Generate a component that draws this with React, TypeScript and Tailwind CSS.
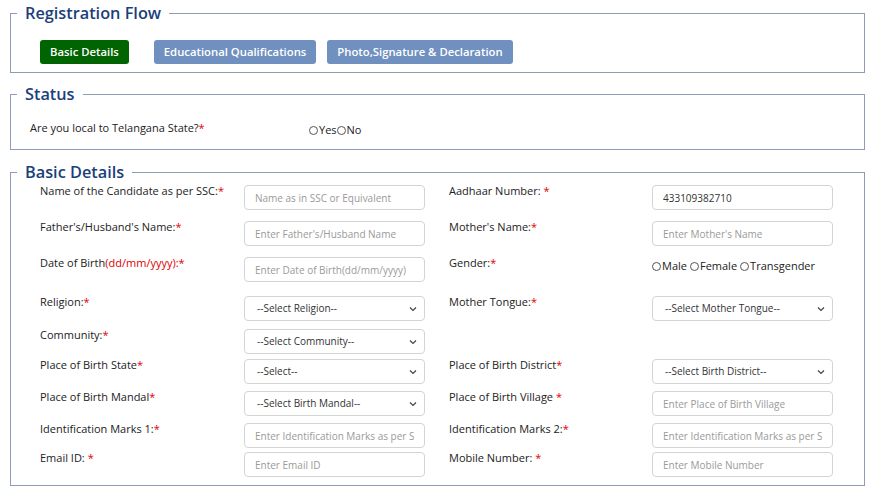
import React from 'react';

const font = { fontFamily: '"Open Sans", "Liberation Sans", sans-serif' };

const Star = () => <span className="text-[#e00000]">*</span>;

const Legend = ({ title }: { title: string }) => (
  <legend className="ml-[6px] px-[8px] text-[16.3px] leading-[24px] font-semibold text-[#1b3f7a]">{title}</legend>
);

const TextInput = ({ placeholder, value }: { placeholder?: string; value?: string }) => (
  <input
    type="text"
    placeholder={placeholder}
    defaultValue={value}
    className="w-[181px] h-[25px] px-[10px] border border-[#d4d4d4] rounded-[4px] text-[10px] text-[#333] placeholder:text-[#9a9a9a] outline-none"
  />
);

const Select = ({ label }: { label: string }) => (
  <div className="relative w-[181px] h-[25px]">
    <select className="appearance-none w-full h-full pl-[12px] pr-6 border border-[#d4d4d4] rounded-[4px] bg-white text-[10px] text-[#333] outline-none">
      <option>{label}</option>
    </select>
    <svg className="absolute right-[8px] top-[10px] pointer-events-none" width="8" height="6" viewBox="0 0 8 6">
      <path d="M1 1.5 L4 4.5 L7 1.5" stroke="#444" strokeWidth="1.2" fill="none" />
    </svg>
  </div>
);

const Radio = ({ name, label, gap }: { name: string; label: string; gap?: boolean }) => (
  <label className={`flex items-center ${gap ? 'mr-[3px]' : ''}`}>
    <input type="radio" name={name} className="appearance-none w-[9px] h-[9px] rounded-full border border-[#555] bg-white" />
    <span className="ml-[1px]">{label}</span>
  </label>
);

type Field = { label: React.ReactNode; control: React.ReactNode } | null;

const rows: { h: number; left: Field; right: Field }[] = [
  {
    h: 36,
    left: { label: <>Name of the Candidate as per SSC:<Star /></>, control: <TextInput placeholder="Name as in SSC or Equivalent" /> },
    right: { label: <>Aadhaar Number: <Star /></>, control: <TextInput value="433109382710" /> },
  },
  {
    h: 36,
    left: { label: <>Father's/Husband's Name:<Star /></>, control: <TextInput placeholder="Enter Father's/Husband Name" /> },
    right: { label: <>Mother's Name:<Star /></>, control: <TextInput placeholder="Enter Mother's Name" /> },
  },
  {
    h: 39,
    left: {
      label: <>Date of Birth<span className="text-[#e00000]">(dd/mm/yyyy):</span><Star /></>,
      control: <TextInput placeholder="Enter Date of Birth(dd/mm/yyyy)" />,
    },
    right: {
      label: <>Gender:<Star /></>,
      control: (
        <div className="flex items-center pt-[1px] text-[11px] text-[#222]">
          <Radio name="gender" label="Male" gap />
          <Radio name="gender" label="Female" gap />
          <Radio name="gender" label="Transgender" />
        </div>
      ),
    },
  },
  {
    h: 33,
    left: { label: <>Religion:<Star /></>, control: <Select label="--Select Religion--" /> },
    right: { label: <>Mother Tongue:<Star /></>, control: <Select label="--Select Mother Tongue--" /> },
  },
  {
    h: 30,
    left: { label: <>Community:<Star /></>, control: <Select label="--Select Community--" /> },
    right: null,
  },
  {
    h: 32,
    left: { label: <>Place of Birth State<Star /></>, control: <Select label="--Select--" /> },
    right: { label: <>Place of Birth District<Star /></>, control: <Select label="--Select Birth District--" /> },
  },
  {
    h: 32,
    left: { label: <>Place of Birth Mandal<Star /></>, control: <Select label="--Select Birth Mandal--" /> },
    right: { label: <>Place of Birth Village <Star /></>, control: <TextInput placeholder="Enter Place of Birth Village" /> },
  },
  {
    h: 29,
    left: { label: <>Identification Marks 1:<Star /></>, control: <TextInput placeholder="Enter Identification Marks as per SSC" /> },
    right: { label: <>Identification Marks 2:<Star /></>, control: <TextInput placeholder="Enter Identification Marks as per SSC" /> },
  },
  {
    h: 25,
    left: { label: <>Email ID: <Star /></>, control: <TextInput placeholder="Enter Email ID" /> },
    right: { label: <>Mobile Number: <Star /></>, control: <TextInput placeholder="Enter Mobile Number" /> },
  },
];

export default function App() {
  return (
    <div className="bg-white w-[869px] h-[487px] overflow-hidden pt-[1px] pl-[10px]" style={font}>
      <fieldset className="w-[855px] border border-[#8d9db8] pb-[8px]">
        <Legend title="Registration Flow" />
        <div className="flex pt-[15px] pl-[29px] text-[11.3px] font-semibold text-white">
          <button className="h-[24px] px-[10px] rounded-[3px] bg-[#006400]">Basic Details</button>
          <button className="h-[24px] px-[10px] ml-[25px] rounded-[3px] bg-[#7090c0]">Educational Qualifications</button>
          <button className="h-[24px] px-[10px] ml-[11px] rounded-[3px] bg-[#7090c0]">Photo,Signature &amp; Declaration</button>
        </div>
      </fieldset>

      <fieldset className="w-[855px] mt-[9px] border border-[#8d9db8] pb-[12px]">
        <Legend title="Status" />
        <div className="flex pt-[15px] pl-[19px] text-[11px] leading-[14px] font-medium text-[#222]">
          <div className="w-[279px]">Are you local to Telangana State?<Star /></div>
          <div className="flex items-center pt-[2px]">
            <Radio name="local" label="Yes" />
            <Radio name="local" label="No" />
          </div>
        </div>
      </fieldset>

      <fieldset className="w-[855px] mt-[10px] border border-[#8d9db8] pb-[8px]">
        <Legend title="Basic Details" />
        <div className="pt-[1px] pl-[29px] text-[11px] font-medium text-[#222]">
          {rows.map((r, i) => (
            <div key={i} className="flex items-start" style={{ height: r.h }}>
              <div className="w-[204px] leading-[12px]">{r.left?.label}</div>
              <div className="w-[205px]">{r.left?.control}</div>
              <div className="w-[203px] leading-[12px]">{r.right?.label}</div>
              <div className="w-[181px]">{r.right?.control}</div>
            </div>
          ))}
        </div>
      </fieldset>
    </div>
  );
}
